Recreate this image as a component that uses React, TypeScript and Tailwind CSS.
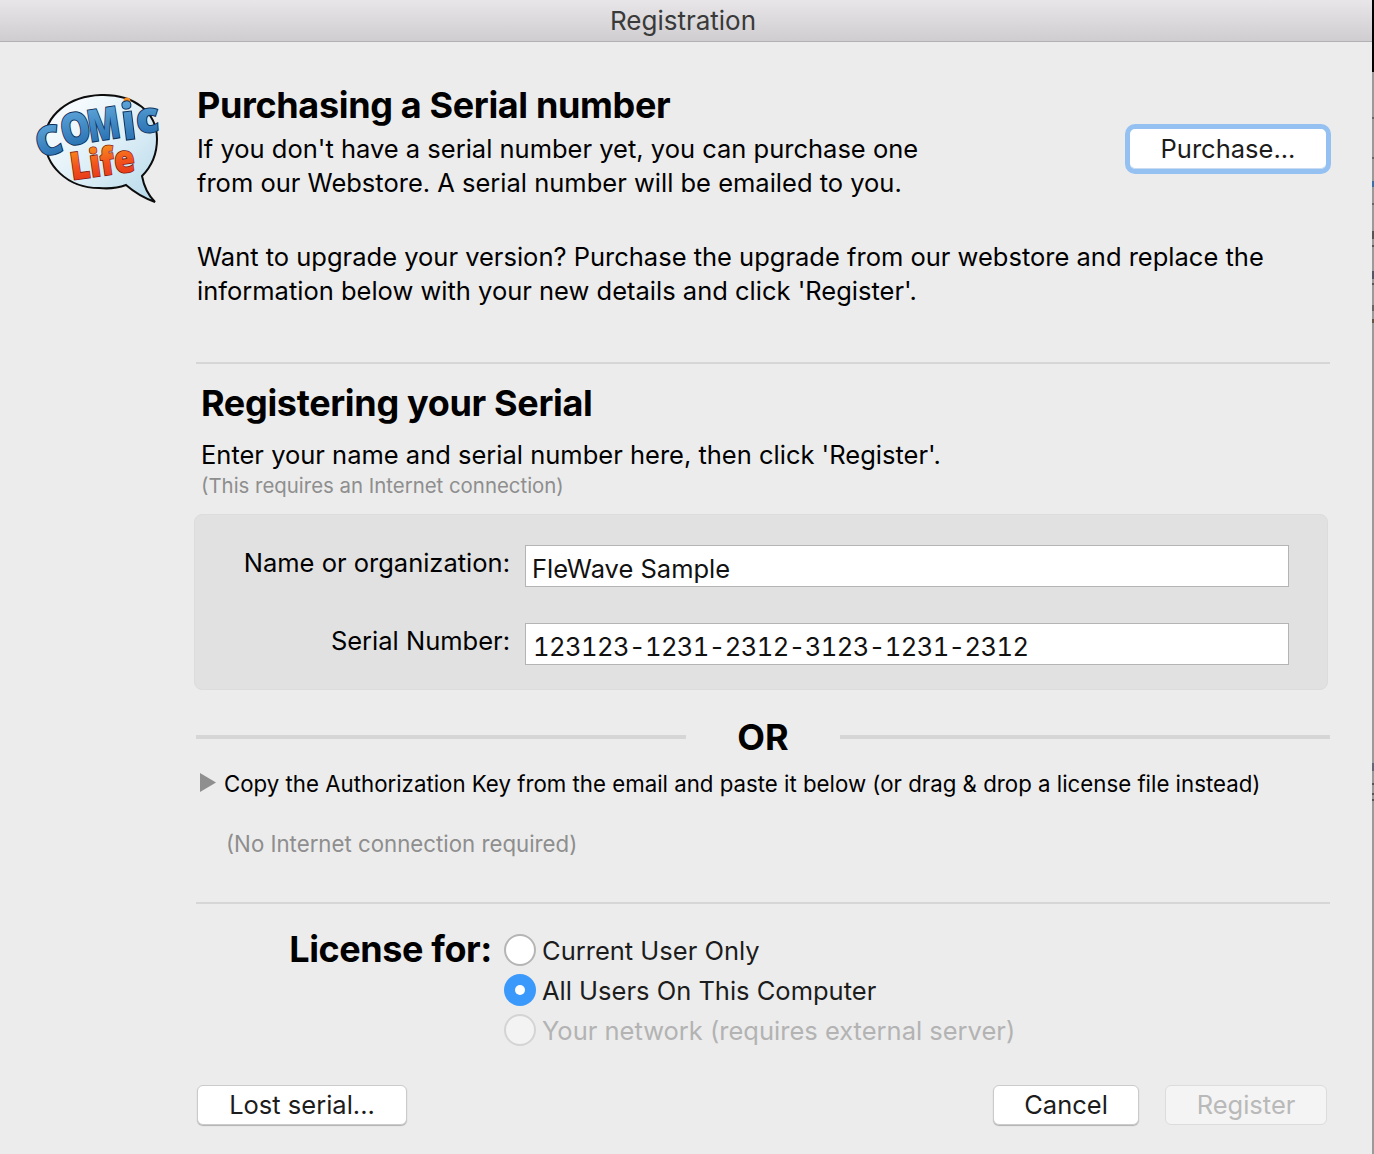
import React from 'react';

function Logo() {
  return (
    <svg width="130" height="114" viewBox="0 0 130 114" className="shrink-0 overflow-visible">
      <defs>
        <linearGradient id="bubble" x1="0" y1="0" x2="1" y2="1">
          <stop offset="0.2" stopColor="#f4fafd" />
          <stop offset="0.6" stopColor="#d9ecf5" />
          <stop offset="1" stopColor="#b4d8ea" />
        </linearGradient>
        <linearGradient id="comic" x1="0" y1="0" x2="0" y2="1">
          <stop offset="0" stopColor="#6db4e4" />
          <stop offset="1" stopColor="#1b63a8" />
        </linearGradient>
        <linearGradient id="life" x1="0" y1="0" x2="0" y2="1">
          <stop offset="0" stopColor="#fba91f" />
          <stop offset="0.55" stopColor="#f2541c" />
          <stop offset="1" stopColor="#e02a1b" />
        </linearGradient>
      </defs>
      <path
        d="M67 3C100 2 123 20 123 47C123 63 116 76 108 84C110 95 114 103 121 110C110 106 100 100 92 93C84 96 75 97 65 96C33 96 11 73 11 48C11 24 34 4 67 3Z"
        fill="url(#bubble)"
        stroke="#0c0c0c"
        strokeWidth="2"
      />
      <circle cx="93" cy="9" r="3.5" fill="#f58a1f" />
      <g
        fontFamily="'Open Sans', sans-serif"
        fontWeight="800"
        fill="url(#comic)"
        stroke="#0f3058"
        strokeWidth="2"
        paintOrder="stroke"
      >
        <text transform="translate(6 66) rotate(-16)" fontSize="40">C</text>
        <text transform="translate(30 55) rotate(-12) scale(.85 1)" fontSize="44">O</text>
        <text transform="translate(56 50) rotate(-9) scale(.76 1)" fontSize="44">M</text>
        <text transform="translate(89 48) rotate(-7)" fontSize="50" fontWeight="700">i</text>
        <text transform="translate(103 41) rotate(-4)" fontSize="42">c</text>
      </g>
      <g
        fontFamily="'Open Sans', sans-serif"
        fontWeight="800"
        fill="url(#life)"
        stroke="#7d1a10"
        strokeWidth="1.6"
        paintOrder="stroke"
      >
        <text transform="translate(38 88) rotate(-8) scale(.88 1)" fontSize="38">Life</text>
      </g>
    </svg>
  );
}

function Radio({ state, label }: { state: 'off' | 'on' | 'disabled'; label: string }) {
  return (
    <div className="flex h-10 items-center">
      {state === 'on' ? (
        <div className="mb-[2px] flex h-8 w-8 items-center justify-center rounded-full bg-[#3b99fc]">
          <div className="h-[10px] w-[10px] rounded-full bg-white" />
        </div>
      ) : state === 'off' ? (
        <div className="mb-[2px] h-8 w-8 rounded-full border-2 border-[#b5b5b5] bg-white" />
      ) : (
        <div className="mb-[2px] h-8 w-8 rounded-full border-2 border-[#d4d4d4] bg-[#f3f3f3]" />
      )}
      <span
        className={
          'ml-[6px] text-[25.5px] ' + (state === 'disabled' ? 'text-[#b3b3b3]' : 'text-[#1c1c1c]')
        }
      >
        {label}
      </span>
    </div>
  );
}

function Field({ label, value, serial }: { label: string; value: string; serial?: boolean }) {
  return (
    <div className="flex h-[42px] items-center">
      <div className="mb-[6px] w-[315px] text-right text-[25.5px] text-black">{label}</div>
      <div
        className={
          'ml-[15px] flex h-[42px] w-[764px] items-center border border-[#b4b4b4] bg-white pt-[6px] text-[25.5px] text-[#111] ' +
          (serial ? 'pl-[7px] tracking-[-0.55px] tabular-nums' : 'pl-[6px]')
        }
      >
        {value}
      </div>
    </div>
  );
}

export default function App() {
  return (
    <div className="flex h-[1154px] w-[1374px] overflow-hidden font-['Inter',sans-serif]">
      <div className="h-full w-[1372px] bg-[#ececec]">
        <div className="flex h-[42px] items-center justify-center border-b border-[#b1b1b1] bg-gradient-to-b from-[#e8e6e8] to-[#cfcdcf] pr-[6px] text-[26px] text-[#3a3a3a]">
          Registration
        </div>

        <div className="flex">
          <div className="w-[197px] pl-[34px] pt-[50px]">
            <Logo />
          </div>

          <div className="w-[1133px]">
            <h1 className="mt-[41px] text-[36px] font-bold leading-[44px] tracking-[-0.35px] text-black">
              Purchasing a Serial number
            </h1>
            <div className="flex items-start justify-between">
              <p className="mt-[5px] text-[25.5px] leading-[34px] text-black">
                If you don't have a serial number yet, you can purchase one
                <br />
                from our Webstore. A serial number will be emailed to you.
              </p>
              <button
                type="button"
                className="mr-[-1px] mt-[-3px] h-[50px] w-[206px] rounded-[10px] border-[5px] border-[#94c1f1] bg-white text-[25.5px] text-[#1c1c1c] shadow-[inset_0_-1px_0_#c9dcf2]"
              >
                Purchase...
              </button>
            </div>
            <p className="mt-[40px] text-[25.5px] leading-[34px] text-black">
              Want to upgrade your version? Purchase the upgrade from our webstore and replace the
              <br />
              information below with your new details and click 'Register'.
            </p>

            <div className="ml-[-1px] mt-[54px] h-[2px] bg-[#d6d6d6]" />

            <h2 className="ml-[4px] mt-[17px] text-[36px] font-bold leading-[44px] tracking-[-0.33px] text-black">
              Registering your Serial
            </h2>
            <p className="ml-[4px] mt-[13px] text-[25.5px] leading-[34px] text-black">
              Enter your name and serial number here, then click 'Register'.
            </p>
            <p className="ml-[4px] mt-[1px] text-[20.4px] leading-[26px] text-[#8e8e8e]">
              (This requires an Internet connection)
            </p>

            <div className="ml-[-3px] mt-[15px] flex h-[176px] w-[1134px] flex-col gap-[36px] rounded-[8px] border border-[#dcdcdc] bg-[#e1e1e1] pt-[30px]">
              <Field label="Name or organization:" value="FleWave Sample" />
              <Field label="Serial Number:" value="123123-1231-2312-3123-1231-2312" serial />
            </div>

            <div className="ml-[-1px] mt-[25px] flex items-center">
              <div className="h-[4px] w-[490px] bg-[#d6d6d6]" />
              <div className="w-[154px] text-center text-[36px] font-bold leading-[44px] text-black">OR</div>
              <div className="h-[4px] flex-1 bg-[#d6d6d6]" />
            </div>

            <div className="ml-[3px] mt-[8px] flex items-center">
              <svg width="16" height="19" viewBox="0 0 16 19" className="mb-[4px] shrink-0">
                <path d="M0 0L16 9.5L0 19Z" fill="#8f8f8f" />
              </svg>
              <span className="ml-[8px] whitespace-nowrap text-[22.25px] leading-[34px] text-black">
                Copy the Authorization Key from the email and paste it below (or drag &amp; drop a license file instead)
              </span>
            </div>
            <p className="ml-[29px] mt-[26px] text-[22.25px] leading-[34px] text-[#8e8e8e]">
              (No Internet connection required)
            </p>

            <div className="ml-[-1px] mt-[41px] h-[2px] bg-[#d6d6d6]" />

            <div className="mt-[26px] flex">
              <div className="mt-[-3px] w-[295px] text-right text-[36px] font-bold leading-[44px] tracking-[-0.4px] text-black">
                License for:
              </div>
              <div className="ml-[12px] mt-[1px]">
                <Radio state="off" label="Current User Only" />
                <Radio state="on" label="All Users On This Computer" />
                <Radio state="disabled" label="Your network (requires external server)" />
              </div>
            </div>

            <div className="mt-[34px] flex items-center">
              <button
                type="button"
                className="h-10 w-[210px] rounded-[6px] border border-[#cbcbcb] bg-white text-[25.5px] text-[#1c1c1c] shadow-[0_1px_1px_rgba(0,0,0,0.25)]"
              >
                Lost serial...
              </button>
              <button
                type="button"
                className="ml-auto h-10 w-[146px] rounded-[6px] border border-[#cbcbcb] bg-white text-[25.5px] text-[#1c1c1c] shadow-[0_1px_1px_rgba(0,0,0,0.25)]"
              >
                Cancel
              </button>
              <button
                type="button"
                className="ml-[26px] mr-[3px] h-10 w-[162px] rounded-[6px] border border-[#dcdcdc] bg-[#f4f4f4] text-[25.5px] text-[#b9b9b9]"
              >
                Register
              </button>
            </div>
          </div>
        </div>
      </div>
      {/* edge of the window behind */}
      <div className="flex h-full w-[2px] flex-col bg-[#9a9a9a]">
        <div className="h-[72px] bg-black" />
        <div className="mt-[45px] h-[2px] bg-[#666]" />
        <div className="mt-[38px] h-[2px] bg-[#666]" />
        <div className="mt-[22px] h-[6px] bg-[#3b6ea5]" />
        <div className="mt-[16px] h-[2px] bg-[#666]" />
        <div className="mt-[26px] h-[8px] bg-[#555]" />
        <div className="mt-[6px] h-[2px] bg-[#555]" />
        <div className="mt-[24px] h-[8px] bg-[#556]" />
        <div className="mt-[4px] h-[2px] bg-[#555]" />
        <div className="mt-[20px] h-[6px] bg-[#666]" />
        <div className="mt-[8px] h-[4px] bg-[#654]" />
        <div className="mt-[440px] h-[8px] bg-[#667]" />
        <div className="mt-[12px] h-[2px] bg-[#555]" />
        <div className="mt-[8px] h-[2px] bg-[#555]" />
        <div className="mt-[4px] h-[2px] bg-[#555]" />
      </div>
    </div>
  );
}
